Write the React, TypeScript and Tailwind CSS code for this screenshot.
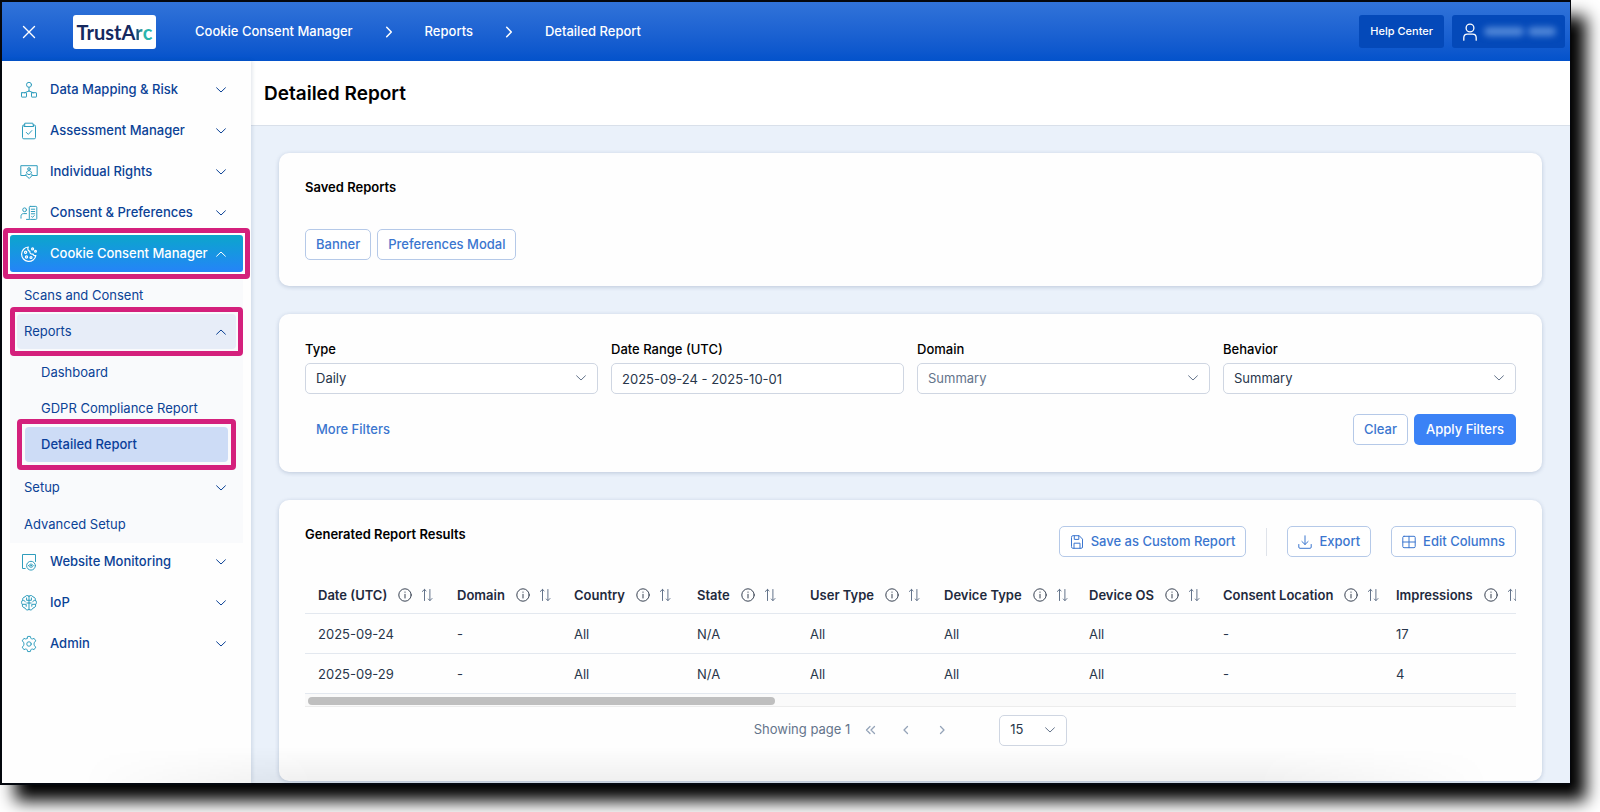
import { useState, type ReactNode } from "react";

type Glyph = { children: ReactNode; className?: string; box?: string; width?: number };

function Svg({ children, className = "size-4", box = "0 0 16 16", width = 1 }: Glyph) {
  return (
    <svg
      viewBox={box}
      className={className}
      fill="none"
      stroke="currentColor"
      strokeWidth={width}
      strokeLinecap="round"
      strokeLinejoin="round"
      aria-hidden="true"
    >
      {children}
    </svg>
  );
}

const ChevronDown = ({ className = "size-3 shrink-0" }: { className?: string }) => (
  <Svg className={className} box="0 0 12 12">
    <path d="M1.600 3.800 6 8l4.400-4.200" />
  </Svg>
);
const ChevronUp = () => (
  <Svg className="size-3 shrink-0" box="0 0 12 12">
    <path d="M1.600 8.200 6 4l4.400 4.200" />
  </Svg>
);

const iconClass = "size-[18px] shrink-0";

const MappingIcon = () => (
  <Svg className={iconClass} box="0 0 18 18">
    <circle cx="9" cy="3.800" r="2.500" />
    <path d="M9 6.300v3.900M9 10 4.500 11.800M9 10l4.500 1.800" />
    <rect x="1.500" y="11.700" width="5" height="4.400" rx=".4" />
    <rect x="11.500" y="11.700" width="5" height="4.400" rx=".4" />
  </Svg>
);
const ClipboardIcon = () => (
  <Svg className={iconClass} box="0 0 18 18">
    <path d="M5 3H3.800A1.300 1.300 0 0 0 2.500 4.300V15.500A1.300 1.300 0 0 0 3.800 16.800H14.200A1.300 1.300 0 0 0 15.500 15.500V4.300A1.300 1.300 0 0 0 14.200 3H13" />
    <path d="M5.200 1.200h7.600l1 3.300H4.200z" />
    <path d="m6.300 10.400 2 2 3.500-3.800" />
  </Svg>
);
const RightsIcon = () => (
  <Svg className={iconClass} box="0 0 18 18">
    <path d="M5.500 12.500H.8V2.700h16.400v9.800h-4.700" />
    <circle cx="9" cy="6" r="1.300" />
    <path d="M6.500 9.600c.3-1.200 1.200-1.900 2.500-1.900s2.200.7 2.500 1.900" />
    <path d="M9 15.200 6 12.600c-.8-.9.600-2.600 2-1.500l1 .7 1-.7c1.400-1.100 2.800.6 2 1.500z" />
  </Svg>
);
const ConsentIcon = () => (
  <Svg className={iconClass} box="0 0 18 18">
    <circle cx="4.600" cy="5.800" r="1.900" />
    <path d="M1 14.200v-1.700c0-2 1-2.900 2.700-2.900h2.800" />
    <rect x="9.300" y="2.400" width="7.500" height="13" rx="1" />
    <path d="M11.300 5.200h3.400M11.300 7.500h3.400M11.300 9.800h3.400M11.600 12.500l1 .8 1.600-1.700M6.500 15.400h2.800" />
  </Svg>
);
const CookieIcon = () => (
  <Svg className={iconClass} box="0 0 18 18" width={1.2}>
    <path d="M8.300 2A7.200 7.200 0 1 0 15.900 10.500c-1.500.5-2.600-.2-2.900-1.500-2 .5-3.500-.7-3.100-2.600C8 6 7.300 3.900 8.300 2z" />
    <circle cx="12.600" cy="3.900" r="1" />
    <circle cx="15.500" cy="6.300" r=".9" />
    <circle cx="5.600" cy="7.300" r="1.100" />
    <circle cx="6.500" cy="12" r="1.100" />
    <circle cx="11" cy="12.500" r="1" />
  </Svg>
);
const MonitorIcon = () => (
  <Svg className={iconClass} box="0 0 18 18">
    <path d="M5.200 15.500H2.500V1.500h13v7" />
    <circle cx="11" cy="12.700" r="4.400" />
    <path d="M8.700 12.700c.6-1.100 1.400-1.600 2.300-1.600s1.700.5 2.300 1.600c-.6 1.100-1.400 1.600-2.300 1.600s-1.700-.5-2.300-1.600z" />
    <circle cx="11" cy="12.700" r=".5" />
  </Svg>
);
const BrainIcon = () => (
  <Svg className={iconClass} box="0 0 18 18">
    <path d="M9 2.200C7.600 1 5.500 1.300 5 3 3.100 3 2.300 4.700 2.800 6 1.200 7 1.200 9.600 2.400 10.600c-.3 2 .9 3.300 2.500 3.300C5.600 16 7.800 16.600 9 15.400c1.200 1.200 3.400.6 4.100-1.500 1.600 0 2.800-1.300 2.500-3.300 1.200-1 1.200-3.600-.4-4.600.5-1.300-.3-3-2.200-3-.5-1.700-2.600-2-4-.8z" />
    <path d="M9 2.200v13.200M2.800 6.500C4 6.300 5 6.700 5.300 7.800M2.400 10.300h3.800v2M6.600 4v2.300H9M15.200 6.500c-1.200-.2-2.200.2-2.500 1.300M15.600 10.300h-3.800v2M11.400 4v2.300H9M9 9h2.200M6.800 9H9" />
  </Svg>
);
const GearIcon = () => (
  <Svg className={iconClass} box="0 0 24 24" width={1.3}>
    <path d="M9.600 4.200 10.200 1.900h3.600l.6 2.300c.2.800 1.200 1.300 2 1.100l2.400-.8 2.200 3.300-1.600 1.800c-.9 1-.9 3.800 0 4.800l1.600 1.800-2.200 3.300-2.400-.8c-.8-.2-1.800.3-2 1.100l-.6 2.300h-3.600l-.6-2.300c-.2-.8-1.200-1.300-2-1.100l-2.400.8L3 16.200l1.600-1.800c.9-1 .9-3.800 0-4.800L3 7.800l2.200-3.300 2.400.8c.8.2 1.800-.3 2-1.100z" />
    <circle cx="12" cy="12" r="3" />
  </Svg>
);

const SaveIcon = () => (
  <Svg className="size-[14px]" box="0 0 14 14">
    <path d="M1.500 2A1.300 1.300 0 0 1 2.800.700h6.400l3.300 3.400v7.900a1.300 1.300 0 0 1-1.300 1.300H2.800A1.300 1.300 0 0 1 1.500 12z" />
    <path d="M4 13.200V8.200h6v5M4.300.8v3.600h4.500V.8" />
  </Svg>
);
const DownloadIcon = () => (
  <Svg className="size-[14px]" box="0 0 14 14">
    <path d="M7 .8v8.600M3.900 6.500 7 9.500l3.100-3M.8 9.500v2.600a1.200 1.200 0 0 0 1.200 1.200h10a1.200 1.200 0 0 0 1.200-1.200V9.500" />
  </Svg>
);
const TableIcon = () => (
  <Svg className="size-[14px]" box="0 0 14 14">
    <rect x=".8" y="1.300" width="12.400" height="11.400" rx="1.200" />
    <path d="M7 1.300v11.400M.8 7h12.400" />
  </Svg>
);
const InfoIcon = () => (
  <Svg className="size-[14px] shrink-0 text-[#374151]" box="0 0 14 14">
    <circle cx="7" cy="7" r="6.200" />
    <path d="M7 6.300v3.700M7 4v.3" />
  </Svg>
);
const SortIcon = () => (
  <Svg className="h-[14px] w-3 shrink-0 text-[#64748b]" box="0 0 12 14">
    <path d="M3.500 12.500v-11M1.300 3.500l2.200-2.100 1.600 1.500M8.900 1.500v11M7.300 11l1.600 1.600 2.100-2.100" />
  </Svg>
);

const callout = "pointer-events-none absolute rounded-[4px] border-5 border-[#d4207c]";

function NavItem({ icon, label, active }: { icon: ReactNode; label: string; active?: boolean }) {
  return (
    <li className="relative">
      <button
        type="button"
        aria-expanded={!!active}
        className={
          active
            ? "flex h-[37px] w-full items-center rounded-[3px] bg-linear-to-b from-[#0ea5cb] to-[#2583f8] pr-4 pl-[10px] text-white"
            : "flex h-[37px] w-full items-center pr-4 pl-[10px] text-[#0b4296]"
        }
      >
        <span className={active ? "text-white" : "text-[#2f9dbd]"}>{icon}</span>
        <span className="ml-3 flex-1 text-left whitespace-nowrap">{label}</span>
        {active ? <ChevronUp /> : <ChevronDown />}
      </button>
      {active && <span className={`${callout} -inset-[7px]`} />}
    </li>
  );
}

function Sidebar() {
  return (
    <nav
      aria-label="Main"
      className="z-10 w-[249px] shrink-0 bg-[#fefefe] px-2 pt-[10px] text-[13px] font-medium shadow-[1px_0_4px_rgba(30,60,110,0.15)]"
    >
      <ul className="flex flex-col gap-1">
        <NavItem icon={<MappingIcon />} label="Data Mapping & Risk" />
        <NavItem icon={<ClipboardIcon />} label="Assessment Manager" />
        <NavItem icon={<RightsIcon />} label="Individual Rights" />
        <NavItem icon={<ConsentIcon />} label="Consent & Preferences" />
        <NavItem icon={<CookieIcon />} label="Cookie Consent Manager" active />
      </ul>
      <ul className="mt-[6px] bg-[#f9fafc] font-normal text-[#0b4296]">
        <li>
          <a href="#scans" className="flex h-9 items-center pl-[14px]">Scans and Consent</a>
        </li>
        <li>
          <div className="relative mx-[7px]">
            <button
              type="button"
              aria-expanded="true"
              className="flex h-[35px] w-full items-center justify-between rounded-[4px] bg-[#e7edf8] pr-[9px] pl-[7px]"
            >
              Reports
              <ChevronUp />
            </button>
            <span className={`${callout} -inset-[7px]`} />
          </div>
          <ul className="flex flex-col gap-px pt-[6px] pb-[7px]">
            <li>
              <a href="#dashboard" className="flex h-[35px] items-center pl-[31px]">Dashboard</a>
            </li>
            <li>
              <a href="#gdpr" className="flex h-[35px] items-center pl-[31px]">GDPR Compliance Report</a>
            </li>
            <li className="relative mx-[15px]">
              <a
                href="#detailed"
                aria-current="page"
                className="flex h-[35px] items-center rounded-[4px] bg-[#cddcf6] pl-4 font-medium text-[#0a3f9a]"
              >
                Detailed Report
              </a>
              <span className={`${callout} -inset-[8px]`} />
            </li>
          </ul>
        </li>
        <li>
          <button
            type="button"
            aria-expanded="false"
            className="flex h-[37px] w-full items-center justify-between pr-4 pl-[14px]"
          >
            Setup
            <ChevronDown />
          </button>
        </li>
        <li>
          <a href="#advanced" className="flex h-[37px] items-center pl-[14px]">Advanced Setup</a>
        </li>
      </ul>
      <ul className="flex flex-col gap-1">
        <NavItem icon={<MonitorIcon />} label="Website Monitoring" />
        <NavItem icon={<BrainIcon />} label="IoP" />
        <NavItem icon={<GearIcon />} label="Admin" />
      </ul>
    </nav>
  );
}

const CrumbArrow = () => (
  <Svg className="mx-[30px] size-3" box="0 0 12 12" width={1.5}>
    <path d="m3.700 1.200 4.600 4.800-4.600 4.800" />
  </Svg>
);

function Header() {
  return (
    <header className="flex h-[59px] items-center bg-linear-to-b from-[#3173d9] to-[#0352cb] pr-[5px] pl-5 text-white">
      <button type="button" aria-label="Close menu">
        <Svg className="size-[14px]" box="0 0 14 14" width={1.4}>
          <path d="m1.500 1.500 11 11M12.500 1.500l-11 11" />
        </Svg>
      </button>
      <a
        href="#home"
        className="ml-[37px] flex h-[34px] w-[83px] items-center justify-center rounded-[3px] bg-white font-[Lato,sans-serif] text-[20px] font-bold text-[#15295f]"
      >
        <span>TrustA</span>
        <span className="bg-linear-to-r from-[#15295f] to-[#2ab5b5] bg-clip-text text-transparent">r</span>
        <span className="text-[#2ab5ac]">c</span>
      </a>
      <nav aria-label="Breadcrumb" className="ml-[39px] flex items-center text-[13px] font-medium whitespace-nowrap">
        <a href="#ccm">Cookie Consent Manager</a>
        <CrumbArrow />
        <a href="#reports">Reports</a>
        <CrumbArrow />
        <span aria-current="page">Detailed Report</span>
      </nav>
      <div className="ml-auto flex gap-2">
        <a
          href="#help"
          className="flex h-[33px] items-center rounded-[3px] bg-[#0449b9] px-[11px] text-[11px] font-medium whitespace-nowrap"
        >
          Help Center
        </a>
        <button
          type="button"
          aria-label="Account"
          className="flex h-[33px] w-[113px] items-center gap-[6px] rounded-[3px] bg-[#0449b9] pl-[10px]"
        >
          <Svg className="h-[18px] w-4" box="0 0 16 18" width={1.3}>
            <circle cx="8" cy="5" r="3.900" />
            <path d="M1.800 17.200v-2.400c0-2.200 1.500-3.600 3.600-3.600h5.200c2.100 0 3.600 1.400 3.600 3.600v2.400" />
          </Svg>
          <span className="flex gap-1 blur-[3px]">
            <span className="h-[9px] w-10 rounded-full bg-[#5187d8]" />
            <span className="h-[9px] w-7 rounded-full bg-[#5187d8]" />
          </span>
        </button>
      </div>
    </header>
  );
}

const card = "rounded-[10px] bg-[#fefefe] shadow-[0_1px_4px_rgba(30,60,110,0.22)]";
const outlineButton =
  "flex h-[31px] items-center gap-[7px] rounded-[5px] border border-[#b5c9e8] bg-white px-[10px] font-medium whitespace-nowrap text-[#3b76cf]";
const field =
  "h-[31px] w-full appearance-none rounded-[5px] border border-[#cfd6e2] bg-white px-[10px] text-[13px] text-[#28364b]";
const fieldLabel = "mb-[5px] block leading-[18px] font-medium text-black";

function SelectField({ id, label, options, muted }: { id: string; label: string; options: string[]; muted?: boolean }) {
  return (
    <div className="min-w-0">
      <label htmlFor={id} className={fieldLabel}>
        {label}
      </label>
      <div className="relative">
        <select id={id} className={muted ? `${field} text-[#64748b]!` : field}>
          {options.map((o) => (
            <option key={o}>{o}</option>
          ))}
        </select>
        <ChevronDown className="pointer-events-none absolute top-[9px] right-[11px] size-3 text-[#64748b]" />
      </div>
    </div>
  );
}

const columns = [
  { name: "Date (UTC)", width: "w-[139px]" },
  { name: "Domain", width: "w-[117px]" },
  { name: "Country", width: "w-[123px]" },
  { name: "State", width: "w-[113px]" },
  { name: "User Type", width: "w-[134px]" },
  { name: "Device Type", width: "w-[145px]" },
  { name: "Device OS", width: "w-[134px]" },
  { name: "Consent Location", width: "w-[173px]" },
  { name: "Impressions", width: "w-[150px]" },
];
const rows = [
  ["2025-09-24", "-", "All", "N/A", "All", "All", "All", "-", "17"],
  ["2025-09-29", "-", "All", "N/A", "All", "All", "All", "-", "4"],
];

function PageButton({ label, d }: { label: string; d: string }) {
  return (
    <button type="button" aria-label={label} className="flex w-9 justify-center text-[#94a3b8]">
      <Svg className="size-3" box="0 0 12 12" width={1.3}>
        <path d={d} />
      </Svg>
    </button>
  );
}

function Results() {
  return (
    <section className={`${card} px-[26px] pt-[26px] pb-[35px]`}>
      <div className="flex items-start justify-between">
        <h2 className="leading-4 font-semibold text-black">Generated Report Results</h2>
        <div className="flex items-center gap-5">
          <button type="button" className={outlineButton}>
            <SaveIcon />
            Save as Custom Report
          </button>
          <span className="h-7 w-px bg-[#dfe3ea]" />
          <button type="button" className={outlineButton}>
            <DownloadIcon />
            Export
          </button>
          <button type="button" className={outlineButton}>
            <TableIcon />
            Edit Columns
          </button>
        </div>
      </div>

      <div className="mt-[19px] overflow-hidden">
        <table className="w-[1228px] table-fixed border-collapse text-left text-[#28364b]">
          <thead>
            <tr className="h-[37px] border-b border-[#e3e8ef]">
              {columns.map((c) => (
                <th key={c.name} scope="col" className={`${c.width} pt-[2px] pl-[13px] font-semibold whitespace-nowrap text-[#1f2a3d]`}>
                  <span className="flex items-center">
                    {c.name}
                    <span className="ml-[11px] flex items-center gap-[9px]">
                      <InfoIcon />
                      <SortIcon />
                    </span>
                  </span>
                </th>
              ))}
            </tr>
          </thead>
          <tbody>
            {rows.map((r) => (
              <tr key={r[0]} className="h-10 border-b border-[#e3e8ef]">
                {r.map((v, i) => (
                  <td key={i} className="pt-[3px] pl-[13px]">
                    {v}
                  </td>
                ))}
              </tr>
            ))}
          </tbody>
        </table>
        <div className="h-[13px] border-b border-[#ececec] bg-[#fafafa] px-[3px] pt-[3px]">
          <div className="h-2 w-[467px] rounded-full bg-[#bfbfbf]" />
        </div>
      </div>

      <div className="mt-2 flex items-center justify-center">
        <span className="mr-[2px] text-[#64748b]">Showing page 1</span>
        <PageButton label="First page" d="M6 2.500 2.500 6 6 9.500M10.500 2.500 7 6l3.500 3.500" />
        <PageButton label="Previous page" d="M7.500 2.500 4 6l3.500 3.500" />
        <PageButton label="Next page" d="M4.500 2.500 8 6l-3.500 3.500" />
        <div className="relative ml-[39px] w-[68px]">
          <select aria-label="Rows per page" className={field}>
            <option>15</option>
            <option>30</option>
            <option>50</option>
          </select>
          <ChevronDown className="pointer-events-none absolute top-[9px] right-[11px] size-3 text-[#64748b]" />
        </div>
      </div>
    </section>
  );
}

export default function App() {
  const [range, setRange] = useState("2025-09-24 - 2025-10-01");
  return (
    <div className="min-h-screen overflow-hidden bg-white pr-[29px] pb-[28px] font-[Inter,sans-serif] text-[13px]">
      <div className="relative border-2 border-r border-[#05070c] bg-white shadow-[15px_16px_16px_#000]">
        <Header />
        <div className="flex">
          <Sidebar />
          <main className="min-w-0 flex-1 bg-[#eaf1fa]">
            <div className="flex h-[65px] items-center border-b border-[#d9e0ea] bg-white pt-[2px] pl-[13px]">
              <h1 className="text-[19px] font-semibold text-black">Detailed Report</h1>
            </div>
            <div className="flex flex-col gap-7 px-7 pt-[27px] pb-[2px]">
              <section className={`${card} p-[26px]`}>
                <h2 className="leading-4 font-semibold text-black">Saved Reports</h2>
                <div className="mt-[34px] flex gap-[6px]">
                  <button type="button" className={outlineButton}>Banner</button>
                  <button type="button" className={outlineButton}>Preferences Modal</button>
                </div>
              </section>

              <section className={`${card} px-[26px] pt-[26px] pb-[27px]`}>
                <div className="grid grid-cols-4 gap-[13px]">
                  <SelectField id="type" label="Type" options={["Daily", "Weekly", "Monthly"]} />
                  <div className="min-w-0">
                    <label htmlFor="range" className={fieldLabel}>
                      Date Range (UTC)
                    </label>
                    <input id="range" type="text" value={range} onChange={(e) => setRange(e.target.value)} className={field} />
                  </div>
                  <SelectField id="domain" label="Domain" options={["Summary"]} muted />
                  <SelectField id="behavior" label="Behavior" options={["Summary"]} />
                </div>
                <div className="mt-5 flex items-center gap-[6px]">
                  <button type="button" className="mr-auto px-[11px] font-medium text-[#3b76cf]">More Filters</button>
                  <button type="button" className={outlineButton}>Clear</button>
                  <button
                    type="button"
                    className="h-[31px] rounded-[5px] bg-[#3b82f6] px-3 font-medium whitespace-nowrap text-white"
                  >
                    Apply Filters
                  </button>
                </div>
              </section>

              <Results />
            </div>
          </main>
        </div>
        <div className="pointer-events-none absolute inset-x-0 bottom-0 z-20 h-9 bg-linear-to-b from-transparent to-black/6 mask-x-from-80% mask-x-to-95%" />
      </div>
    </div>
  );
}
